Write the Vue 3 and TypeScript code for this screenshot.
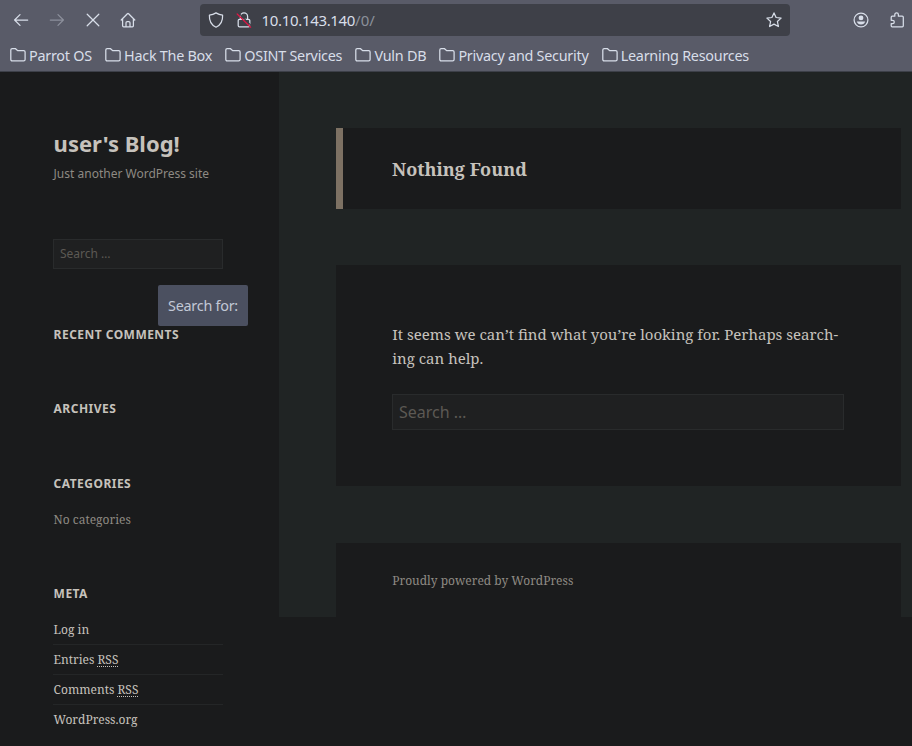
<script setup lang="ts">
import { ref } from 'vue'

interface MetaLink {
  text: string
  abbr?: string
}

const bookmarks: string[] = [
  'Parrot OS',
  'Hack The Box',
  'OSINT Services',
  'Vuln DB',
  'Privacy and Security',
  'Learning Resources',
]
const metaLinks: MetaLink[] = [
  { text: 'Log in' },
  { text: 'Entries ', abbr: 'RSS' },
  { text: 'Comments ', abbr: 'RSS' },
  { text: 'WordPress.org' },
]
const sideQuery = ref('')
const mainQuery = ref('')
</script>

<template>
  <div class="browser">
    <header class="chrome">
      <div class="toolbar">
        <nav class="nav">
          <svg class="ico" viewBox="0 0 16 16"><path d="M14.7 8H1.6M7 2.6 1.6 8 7 13.4" /></svg>
          <svg class="ico dim" viewBox="0 0 16 16"><path d="M1.3 8h13.1M9 2.6 14.4 8 9 13.4" /></svg>
          <svg class="ico" viewBox="0 0 16 16"><path d="m2.2 2.2 11.6 11.6M13.8 2.2 2.2 13.8" /></svg>
          <svg class="ico home" viewBox="0 0 16 16"><path d="M1.2 8 7.4 1.7q.6-.5 1.2 0L14.8 8M2.6 6.8v7q0 1 1 1h8.8q1 0 1-1v-7M6 14.8v-4.1q0-1.2 1.2-1.2h1.6q1.2 0 1.2 1.2v4.1" /></svg>
        </nav>
        <div class="urlbar">
          <svg class="ico" viewBox="0 0 16 16"><path d="M8 .9Q5 2.8 1.4 3.2C1.1 8.7 3 12.8 8 15.2c5-2.4 6.900-6.500 6.600-12Q11 2.800 8 .9Z" /></svg>
          <svg class="ico lock" viewBox="0 0 16 16"><path d="M4.400 7.300V4.400a3.600 3.600 0 0 1 7.200 0v2.900M3.500 7.300h9q1.300 0 1.300 1.300v5q0 1.300-1.300 1.300h-9q-1.300 0-1.300-1.300v-5q0-1.300 1.300-1.300Z" /><path class="cut" d="m2.500 1 13 12.900" /><path class="slash" d="m1.200 2 13.400 13.200" /></svg>
          <span class="url">10.10.143.140<span class="path">/0/</span></span>
          <svg class="ico star" viewBox="0 0 16 16"><path d="m8 .9 2.100 4.600 5 .6-3.700 3.400 1 5L8 12.100l-4.400 2.400 1-5L.9 6.100l5-.6Z" /></svg>
        </div>
        <div class="actions">
          <svg class="ico" viewBox="0 0 16 16"><circle cx="8" cy="8" r="6.900" /><circle class="solid" cx="8" cy="5.900" r="2.400" /><path class="solid" d="M3.800 9.600h8.400Q11.300 12.600 8 12.600T3.800 9.600Z" /></svg>
          <svg class="ico" viewBox="0 0 16 16"><path d="M2.200 8.300V5.200q0-1 1-1h2.600V2.700q0-1.800 1.800-1.800t1.800 1.800v1.500h3.900q1 0 1 1v8.600q0 1-1 1H3.200q-1 0-1-1v-2.200h1.400q1.700 0 1.700-1.650T3.600 8.300Z" /></svg>
        </div>
      </div>
      <nav class="bookmarks">
        <a v-for="name in bookmarks" :key="name" class="bookmark">
          <svg class="folder" viewBox="0 0 16 14"><path d="M.8 11.400V2.100Q.8.700 2.200.700h3.300L7.700 2.700h6Q15.100 2.700 15.100 4.100v7.300q0 1.400-1.400 1.400H2.200q-1.400 0-1.400-1.400Z" /></svg>
          <span class="label">{{ name }}</span>
        </a>
      </nav>
    </header>

    <div class="page">
      <aside class="sidebar">
        <h1 class="title">user's Blog!</h1>
        <p class="tagline">Just another WordPress site</p>
        <div class="side-search">
          <input v-model="sideQuery" class="field small" type="search" placeholder="Search …" />
          <div class="tip">Search for:</div>
        </div>
        <section class="widget comments"><h2>Recent Comments</h2></section>
        <section class="widget archives"><h2>Archives</h2></section>
        <section class="widget categories">
          <h2>Categories</h2>
          <p>No categories</p>
        </section>
        <section class="widget">
          <h2>Meta</h2>
          <ul>
            <li v-for="(link, i) in metaLinks" :key="i">{{ link.text }}<abbr v-if="link.abbr">{{ link.abbr }}</abbr></li>
          </ul>
        </section>
      </aside>

      <main class="content">
        <header class="page-header"><h1>Nothing Found</h1></header>
        <section class="card">
          <p>It seems we can’t find what you’re looking for. Perhaps search-<br />ing can help.</p>
          <input v-model="mainQuery" class="field" type="search" placeholder="Search …" />
        </section>
        <footer class="footer">Proudly powered by WordPress</footer>
      </main>
    </div>
  </div>
</template>

<style>
body {
  margin: 0;
  background: #1a1b1c;
}
</style>

<style scoped>
* {
  box-sizing: border-box;
}
h1, h2, p, ul {
  margin: 0;
  padding: 0;
}
.browser {
  height: 746px;
  overflow: hidden;
  background: #1a1b1c;
  font-family: "Noto Sans", sans-serif;
  color: #c6c2bc;
}
.chrome {
  height: 72px;
  background: #595b68;
  border-bottom: 1px solid #3d4049;
  color: #d8dee9;
}
.toolbar {
  display: flex;
  align-items: center;
  height: 40px;
  padding-left: 13px;
}
.ico {
  display: block;
  flex: none;
  width: 16px;
  height: 16px;
  fill: none;
  stroke: #d8dee9;
  stroke-width: 1.25;
  stroke-linecap: round;
  stroke-linejoin: round;
}
.dim {
  opacity: 0.4;
}
.home {
  margin-left: -0.6px;
}
.nav {
  display: flex;
  gap: 20px;
  width: 187px;
}
.urlbar {
  display: flex;
  align-items: center;
  width: 590px;
  height: 32px;
  padding: 0 8px;
  border-radius: 4px;
  background: #3e4048;
}
.lock {
  margin-left: 12px;
}
.cut {
  stroke: #3e4048;
}
.slash {
  stroke: #dc1744;
}
.solid {
  fill: #d8dee9;
  stroke: none;
}
.url {
  margin-left: 9.5px;
  padding-bottom: 1px;
  font-size: 15px;
  line-height: 20px;
  letter-spacing: -0.33px;
}
.path {
  color: #8b909a;
  letter-spacing: 0;
}
.star {
  margin-left: auto;
}
.actions {
  display: flex;
  gap: 20px;
  margin-left: 63px;
}
.bookmarks {
  display: flex;
  gap: 13.2px;
  padding: 5px 0 0 10px;
}
.bookmark {
  display: flex;
  align-items: center;
  gap: 3px;
  height: 20px;
  font-size: 14.4px;
  line-height: 20px;
  letter-spacing: -0.26px;
  white-space: nowrap;
}
.label {
  padding-top: 2px;
}
.folder {
  width: 16px;
  height: 14px;
  fill: none;
  stroke: #d8dee9;
  stroke-width: 1.25;
}
.page {
  display: flex;
  height: 674px;
}
.sidebar {
  flex: none;
  width: 279px;
  padding: 55px 56px 0 53px;
}
.title {
  padding-left: 0.6px;
  font-size: 22px;
  line-height: 32px;
}
.tagline {
  margin-top: 6px;
  padding-left: 0.6px;
  font-size: 12px;
  line-height: 18px;
  color: #8e8a83;
}
.side-search {
  position: relative;
  margin-top: 56px;
}
.field {
  display: block;
  width: 100%;
  height: 36px;
  padding: 0 6px;
  border: 1px solid #292b2c;
  border-radius: 0;
  outline: 0;
  appearance: none;
  background: #1f2021;
  color: #c6c2bc;
  font: 16px "Noto Sans", sans-serif;
}
.field::placeholder {
  color: #5c5954;
  opacity: 1;
}
.small {
  height: 30px;
  padding-bottom: 2px;
  font-size: 12px;
}
.tip {
  position: absolute;
  top: 46px;
  left: 105px;
  width: 90px;
  height: 41px;
  border-radius: 2px;
  background: #4b5060;
  color: #c2c8d6;
  font-size: 14.4px;
  line-height: 41px;
  letter-spacing: -0.26px;
  text-align: center;
}
.widget h2 {
  padding-left: 0.6px;
  font-size: 12px;
  line-height: 18px;
  letter-spacing: 0.47px;
  text-transform: uppercase;
}
.comments {
  margin-top: 57px;
}
.archives {
  margin: 56px 0 57px;
}
.categories {
  margin-bottom: 56px;
}
.categories p {
  margin-top: 18px;
  padding-left: 0.6px;
  font: 12px/18px "Noto Serif", "DejaVu Serif", serif;
  color: #8e8a83;
}
.widget ul {
  margin-top: 12px;
  list-style: none;
  font: 12px/18px "Noto Serif", "DejaVu Serif", serif;
}
.widget li {
  height: 30px;
  padding: 6px 0 0 0.6px;
  border-bottom: 1px solid #242627;
}
.widget li:last-child {
  border: 0;
}
abbr {
  display: inline-block;
  height: 16px;
  border-bottom: 1px dotted #c6c2bc;
}
.content {
  width: 633px;
  height: 545px;
  padding: 56px 11px 0 57px;
  background: #202424;
  font-family: "Noto Serif", "DejaVu Serif", serif;
}
.page-header {
  height: 81px;
  padding: 28px 49px;
  border-left: 7px solid #7d7163;
  background: #1a1b1c;
}
.page-header h1 {
  font-size: 18px;
  line-height: 26px;
}
.card {
  height: 221px;
  margin: 56px 0 57px;
  padding: 57px 57px 0 56px;
  background: #1a1b1c;
}
.card p {
  margin-bottom: 24px;
  padding-left: 0.3px;
  font-size: 15px;
  line-height: 24px;
  white-space: nowrap;
}
.footer {
  height: 74px;
  padding: 29px 56px 0 56.3px;
  background: #1a1b1c;
  color: #8e8a83;
  font-size: 12px;
  line-height: 18px;
}
</style>
